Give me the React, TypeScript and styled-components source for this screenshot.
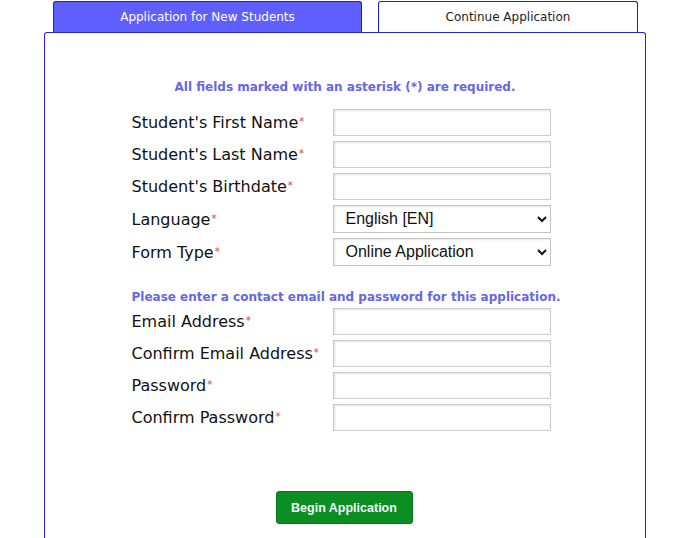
import React from "react";
import styled, { createGlobalStyle } from "styled-components";

const GlobalStyle = createGlobalStyle`
  html, body {
    margin: 0;
    padding: 0;
    background: #ffffff;
  }
  body {
    font-family: "DejaVu Sans", Verdana, sans-serif;
  }
`;

const Page = styled.div`
  padding: 1px 0 0 44px;
  width: 602px;
`;

const TabBar = styled.div`
  display: flex;
  align-items: flex-end;
  padding-left: 9px;
  gap: 16px;
`;

const Tab = styled.div<{ active?: boolean; w: number }>`
  width: ${(p) => p.w}px;
  height: 31px;
  box-sizing: border-box;
  display: flex;
  align-items: center;
  justify-content: center;
  border: 1px solid #1c1cd0;
  border-bottom: none;
  border-radius: 3px 3px 0 0;
  background: ${(p) => (p.active ? "#5f5ffd" : "#ffffff")};
  color: ${(p) => (p.active ? "#ffffff" : "#222222")};
  font-size: 12px;
  cursor: pointer;
`;

const Panel = styled.div`
  border: 1px solid #2424d4;
  border-radius: 3px 3px 0 0;
  border-bottom: none;
  height: 520px;
  box-sizing: border-box;
  padding-top: 47px;
  display: flex;
  flex-direction: column;
  align-items: center;
`;

const Notice = styled.div<{ left?: boolean }>`
  color: #6767e0;
  font-size: 12px;
  font-weight: bold;
  white-space: nowrap;
  text-align: ${(p) => (p.left ? "left" : "center")};
`;

const Form = styled.div`
  display: grid;
  grid-template-columns: 201px 218px;
  margin-left: -8px;
  margin-top: 12px;
`;

const Label = styled.label<{ tall?: boolean }>`
  font-size: 16px;
  color: #111111;
  display: flex;
  align-items: center;
  height: ${(p) => (p.tall ? 33 : 32)}px;
  padding-top: 1px;
  box-sizing: border-box;
  white-space: nowrap;
`;

const Star = styled.span`
  color: #e03a3a;
  font-size: 10px;
  margin-left: 1px;
  position: relative;
  top: -1px;
`;

const Cell = styled.div<{ tall?: boolean }>`
  height: ${(p) => (p.tall ? 33 : 32)}px;
  display: flex;
  align-items: center;
`;

const TextInput = styled.input`
  width: 218px;
  height: 27px;
  box-sizing: border-box;
  border: 1px solid #cccccc;
  box-shadow: inset 1px 1px 2px rgba(0, 0, 0, 0.12);
  background: #ffffff;
  outline: none;
`;

const Select = styled.select`
  width: 218px;
  height: 28px;
  box-sizing: border-box;
  border: 1px solid #c4c4c4;
  box-shadow: inset 1px 1px 2px rgba(0, 0, 0, 0.1);
  background: #ffffff;
  font-family: "Liberation Sans", Arial, sans-serif;
  font-size: 16px;
  color: #111111;
  padding-left: 8px;
  outline: none;
`;

const SectionRow = styled.div`
  grid-column: 1 / span 2;
  padding-top: 22px;
  padding-bottom: 1px;
`;

const Button = styled.button`
  margin-top: 58px;
  margin-left: -2px;
  width: 137px;
  height: 33px;
  background: #0b8f23;
  border: 1px solid #07761a;
  border-radius: 3px;
  color: #f2f6ff;
  font-family: "Liberation Sans", Arial, sans-serif;
  font-weight: bold;
  font-size: 12.5px;
  cursor: pointer;
`;

const firstFields = ["Student's First Name", "Student's Last Name", "Student's Birthdate"];
const contactFields = ["Email Address", "Confirm Email Address", "Password", "Confirm Password"];

function Field({ label, tall, children }: { label: string; tall?: boolean; children: React.ReactNode }) {
  return (
    <>
      <Label tall={tall}>
        {label}
        <Star>*</Star>
      </Label>
      <Cell tall={tall}>{children}</Cell>
    </>
  );
}

export default function App() {
  return (
    <>
      <GlobalStyle />
      <Page>
        <TabBar>
          <Tab active w={309}>Application for New Students</Tab>
          <Tab w={260}>Continue Application</Tab>
        </TabBar>
        <Panel>
          <Notice>All fields marked with an asterisk (*) are required.</Notice>
          <Form>
            {firstFields.map((f) => (
              <Field key={f} label={f}>
                <TextInput type="text" />
              </Field>
            ))}
            <Field label="Language" tall>
              <Select defaultValue="en">
                <option value="en">English [EN]</option>
              </Select>
            </Field>
            <Field label="Form Type" tall>
              <Select defaultValue="online">
                <option value="online">Online Application</option>
              </Select>
            </Field>
            <SectionRow>
              <Notice left>Please enter a contact email and password for this application.</Notice>
            </SectionRow>
            {contactFields.map((f) => (
              <Field key={f} label={f}>
                <TextInput type={f.includes("Password") ? "password" : "text"} />
              </Field>
            ))}
          </Form>
          <Button>Begin Application</Button>
        </Panel>
      </Page>
    </>
  );
}
